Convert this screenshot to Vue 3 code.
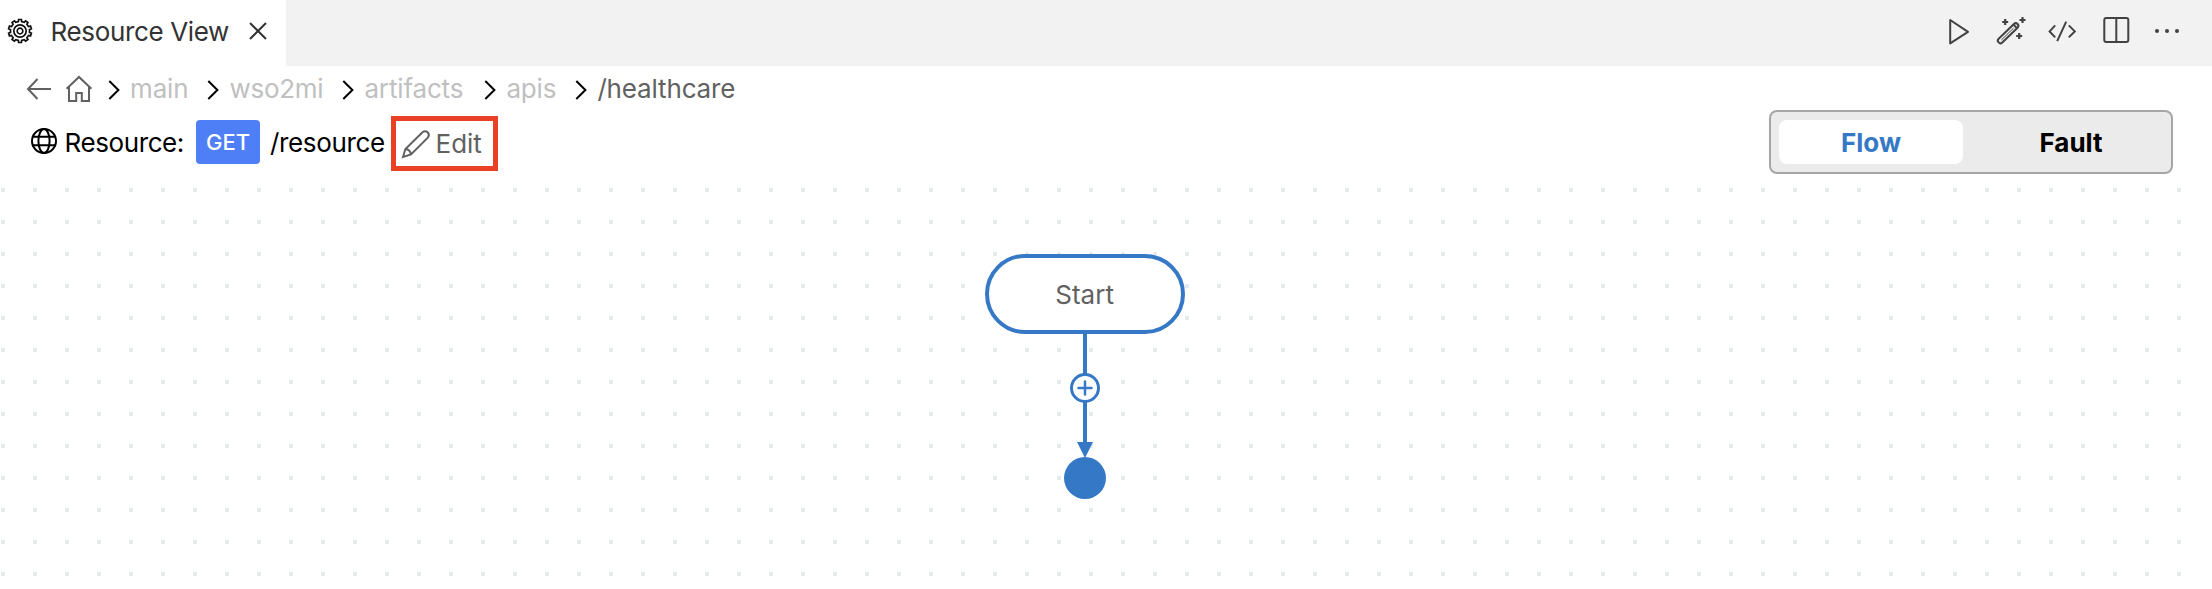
<script setup>
import { ref } from 'vue'

const crumbs = [
  { label: 'main', cls: 'main' },
  { label: 'wso2mi', cls: 'wso' },
  { label: 'artifacts', cls: 'artifacts' },
  { label: 'apis', cls: 'apis' },
  { label: '/healthcare', cls: 'current' },
]
const view = ref('Flow')

// Outline of a toothed gear centred on (0, 0)
const teeth = 10
const gear = Array.from({ length: teeth }, (_, i) => {
  const step = (Math.PI * 2) / teeth
  const a = i * step - Math.PI / 2
  const p = (r, t) => `${(r * Math.cos(a + t * step)).toFixed(2)} ${(r * Math.sin(a + t * step)).toFixed(2)}`
  return `${i ? 'L' : 'M'}${p(9.6, -0.27)}L${p(11.6, -0.2)}L${p(11.6, 0.2)}L${p(9.6, 0.27)}`
}).join('') + 'Z'
</script>

<template>
  <div class="window">
    <header class="tabs">
      <div class="tab">
        <svg class="gear" width="28" height="28" viewBox="-14 -14 28 28">
          <path :d="gear" />
          <circle r="6.2" /><circle r="2.8" />
        </svg>
        <span class="title">Resource View</span>
        <svg class="close" width="20" height="20" viewBox="0 0 20 20"><path d="M2 2L18 18M18 2L2 18" /></svg>
      </div>
      <nav class="actions">
        <svg width="30" height="30" viewBox="0 0 30 30"><path d="M7.2 5V28.4L25 16.8Z" stroke-linejoin="round" /></svg>
        <svg width="30" height="30" viewBox="0 0 30 30">
          <rect x="-13.2" y="-2.6" width="26.4" height="5.2" rx="2.6" transform="translate(12.1 18.2) rotate(-44)" />
          <path d="M5.4 25L17.6 13" stroke-width="1" /><path d="M17.4 9.6L20.6 12.8" />
          <path class="spark" d="M9.2 4V10M6.2 7H12.2M26.5 2V8M23.5 5H29.5M23.2 18V24M20.2 21H26.2" />
        </svg>
        <svg width="30" height="30" viewBox="0 0 30 30"><path d="M7.2 10.4L1.6 16.4L7.2 22.4M20.8 10.4L26.8 16.4L20.8 22.4M18.2 6.6L9.2 26.2" /></svg>
        <svg width="30" height="30" viewBox="0 0 30 30"><rect x="3.3" y="3" width="24" height="24" rx="2" /><path d="M15.3 3V27" /></svg>
        <svg width="30" height="30" viewBox="0 0 30 30"><g class="dots"><circle cx="4" cy="16" r="2" /><circle cx="14" cy="16" r="2" /><circle cx="24" cy="16" r="2" /></g></svg>
      </nav>
    </header>

    <nav class="crumbs">
      <svg class="back" width="26" height="24" viewBox="0 0 26 24"><path d="M11.5 2L2 12L11.5 22M2 12H25" /></svg>
      <svg class="home" width="28" height="28" viewBox="0 0 28 28"><path d="M1.6 13.8L14 2L26.4 13.8M4 12V26H11.2V18H16.8V26H24V12" /></svg>
      <template v-for="c in crumbs" :key="c.label">
        <svg class="chevron" width="12" height="20" viewBox="0 0 12 20"><path d="M1.3 1L10.4 10L1.3 19" /></svg>
        <span :class="['crumb', c.cls]">{{ c.label }}</span>
      </template>
    </nav>

    <section class="resource">
      <svg class="globe" width="28" height="28" viewBox="0 0 28 28">
        <circle cx="14" cy="14" r="12" /><ellipse cx="14" cy="14" rx="5.6" ry="12" />
        <path d="M2.8 9.8H25.2M2.8 18.2H25.2" />
      </svg>
      <span class="label">Resource:</span>
      <span class="method">GET</span>
      <span class="path">/resource</span>
      <button class="edit">
        <svg width="30" height="30" viewBox="0 0 30 30"><path d="M2 28L4.4 20L21.5 3.2Q24 1.2 26.8 3.4Q29 6 26.8 8.6L10 25.4ZM4.4 20Q9 20.5 10 25.4" /></svg>
        <span>Edit</span>
      </button>
      <div class="switch">
        <button v-for="v in ['Flow', 'Fault']" :key="v" :class="{ on: view === v }" @click="view = v">{{ v }}</button>
      </div>
    </section>

    <main class="canvas">
      <svg class="flow" width="204" height="248" viewBox="0 0 204 248">
        <rect class="node" x="2" y="2" width="196" height="76" rx="38" />
        <text x="99.6" y="49.7" text-anchor="middle">Start</text>
        <path class="link" d="M100 80V192" />
        <circle class="plus" cx="100" cy="134" r="13.5" />
        <path class="cross" d="M93.5 134H106.5M100 127.5V140.5" />
        <path class="solid" d="M92 188H108L100 204Z" />
        <circle class="solid" cx="100" cy="224" r="21" />
      </svg>
    </main>
  </div>
</template>

<style>
body { margin: 0; background: #fff; }
</style>

<style scoped>
.window { width: 2212px; height: 589px; overflow: hidden; background: #fff; font: 26px/32px Inter, "Liberation Sans", sans-serif; color: #000; white-space: nowrap; }
svg { flex: none; fill: none; stroke: #616161; stroke-width: 2; overflow: visible; }
button { border: 0; padding: 0; background: none; font: inherit; color: inherit; }
.tabs { height: 66px; display: flex; justify-content: space-between; background: #f2f2f2; }
.tab { width: 286px; box-sizing: border-box; padding-left: 6px; display: flex; align-items: center; background: #fff; color: #333; }
.gear { stroke: #111; stroke-width: 1.7; margin-top: -4px; }
.title { width: 196px; margin: -2px 0 0 16.5px; letter-spacing: -0.35px; }
.close { stroke: #333; margin-left: 1px; margin-top: -4px; }
.actions { display: flex; gap: 22.5px; padding: 15px 29px 0 0; }
.actions svg { stroke: #424242; }
.actions .spark { stroke-width: 2.2; }
.actions .dots { fill: #424242; stroke: none; }
.crumbs { height: 46px; padding-left: 26px; display: flex; align-items: center; }
.home { margin: 0 -1px 0 13px; }
.chevron { stroke: #000; margin: 2px 10px 0 16px; }
.crumb { color: #c0c0c0; letter-spacing: -0.15px; }
.main { width: 61.4px; }
.wso { width: 97px; letter-spacing: -0.25px; }
.artifacts { width: 104px; }
.apis { width: 53px; }
.current { color: #616161; }
.resource { height: 64px; margin-top: -2px; padding: 0 39px 0 30px; display: flex; align-items: center; }
.globe { stroke: #000; margin-top: -3px; }
.label { width: 131.5px; margin: 2px 0 0 6.5px; letter-spacing: -0.4px; }
.method { width: 64px; height: 44px; line-height: 44px; border-radius: 4px; background: #4e7ff7; color: #fff; text-align: center; font-size: 22px; font-weight: 500; }
.path { width: 120.5px; margin: 2px 0 0 10px; letter-spacing: -0.35px; }
.edit { width: 107px; height: 55px; margin-top: 3px; border: 5px solid #ea4025; box-sizing: border-box; display: flex; align-items: center; padding-left: 5px; gap: 5px; color: #616161; }
.switch { width: 404px; height: 64px; margin-left: auto; box-sizing: border-box; border: 2px solid #a6a6a6; border-radius: 8px; background: #ebebeb; padding: 8px; display: flex; }
.switch button { width: 184px; height: 44px; padding-top: 2px; box-sizing: border-box; border-radius: 8px; font-weight: 700; }
.switch button + button { margin-left: 16px; }
.switch .on { background: #fff; color: #3578c6; }
.canvas { height: 401px; margin-top: 14px; width: 2184px; padding-top: 66px; box-sizing: border-box; background: conic-gradient(from 90deg at 28px 28px, #e4ebf0 90deg, #fff 0) 5px 4px / 32px 32px; }
.flow { display: block; margin-left: 985px; }
.node, .plus { fill: #fff; stroke: #3578c6; stroke-width: 4; }
.plus { stroke-width: 3; }
.link { stroke: #3578c6; stroke-width: 4; }
.cross { stroke: #3578c6; stroke-width: 2.5; stroke-linecap: round; }
.solid { fill: #3578c6; stroke: none; }
.flow text { fill: #616161; stroke: none; }
</style>
